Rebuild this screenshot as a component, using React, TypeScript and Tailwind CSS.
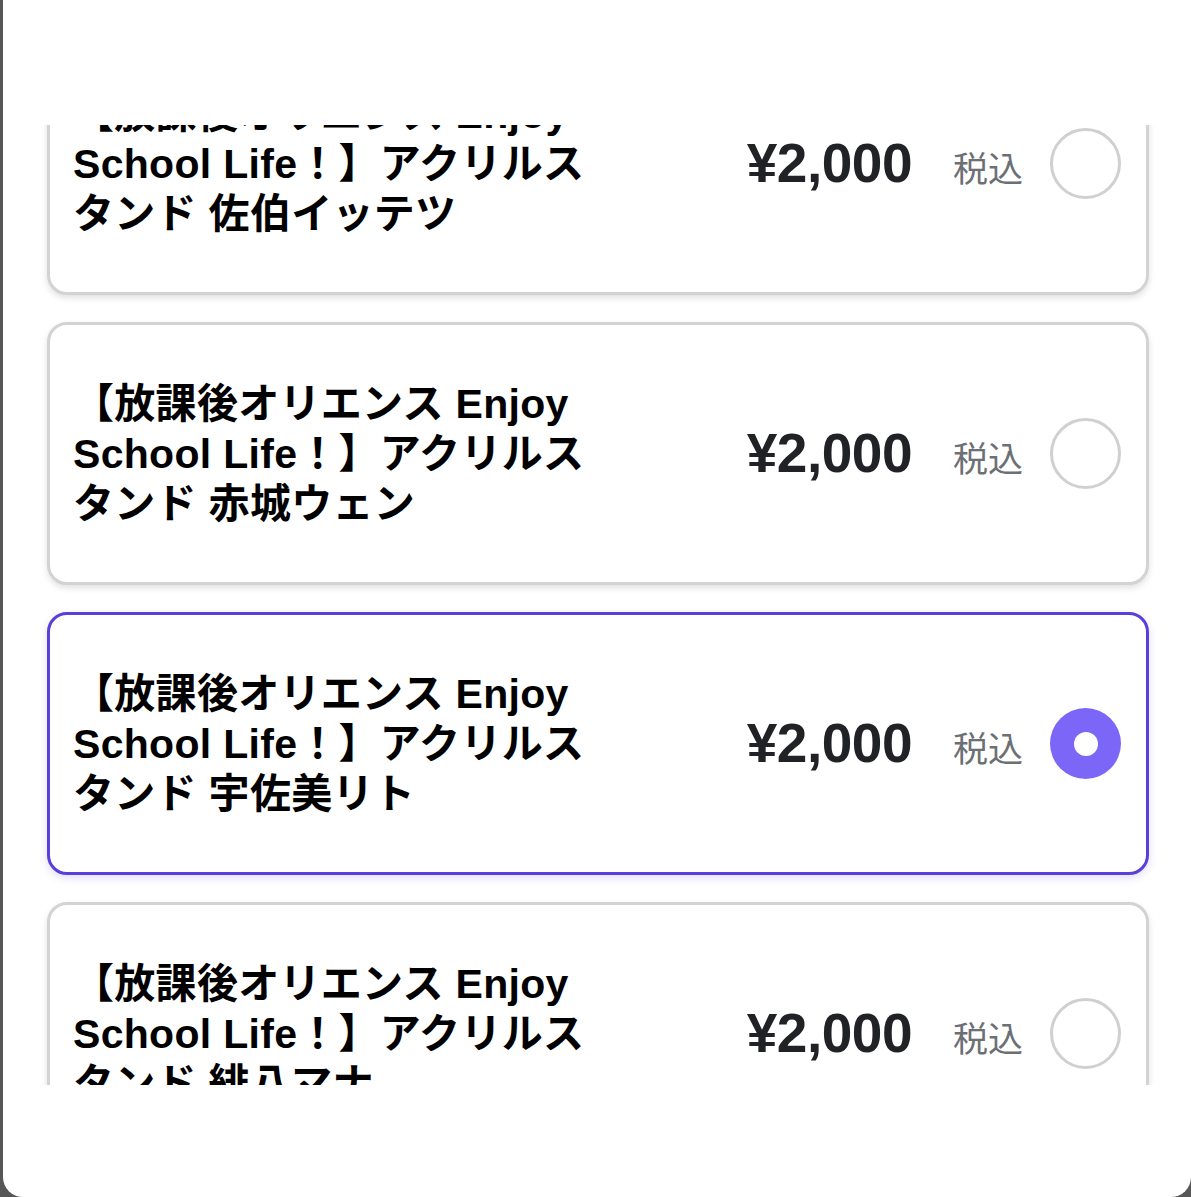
import React, { useLayoutEffect, useRef, useState } from 'react';

interface Item {
  id: number;
  name: string;
  price: number;
}

const items: Item[] = [
  { id: 1, name: '【放課後オリエンス Enjoy School Life！】アクリルスタンド 佐伯イッテツ', price: 2000 },
  { id: 2, name: '【放課後オリエンス Enjoy School Life！】アクリルスタンド 赤城ウェン', price: 2000 },
  { id: 3, name: '【放課後オリエンス Enjoy School Life！】アクリルスタンド 宇佐美リト', price: 2000 },
  { id: 4, name: '【放課後オリエンス Enjoy School Life！】アクリルスタンド 緋八マナ', price: 2000 },
];

const font = { fontFamily: '"Liberation Sans", "Noto Sans CJK JP", sans-serif' };

const formatYen = (n: number) => `¥${n.toLocaleString('en-US')}`;

const App: React.FC = () => {
  const [selected, setSelected] = useState(3);
  const listRef = useRef<HTMLDivElement>(null);

  // list is shown scrolled a little way down
  useLayoutEffect(() => {
    if (listRef.current) listRef.current.scrollTop = 93;
  }, []);

  return (
    <div className="h-[1197px] w-full bg-[#575757] pl-[3px] overflow-hidden" style={font}>
      <div className="h-full bg-white rounded-b-[20px] flex flex-col">
        <div className="h-[125px] shrink-0" />
        <div ref={listRef} className="h-[960px] shrink-0 overflow-hidden">
          <div className="flex flex-col gap-[27px] pl-[44px] pr-[42px] pb-10">
            {items.map((item) => {
              const isSelected = selected === item.id;
              return (
                <button
                  key={item.id}
                  onClick={() => setSelected(item.id)}
                  className={`h-[263px] w-full flex items-center text-left bg-white rounded-[20px] pl-[23px] pr-[25px] ${
                    isSelected
                      ? 'border-[3px] border-[#5a3fda] shadow-[0_3px_8px_rgba(90,63,218,0.18)]'
                      : 'border-[3px] border-[#d3d3d3] shadow-[0_3px_6px_rgba(0,0,0,0.12)]'
                  }`}
                >
                  <div className="w-[532px] text-[41px] leading-[50px] font-bold text-black tracking-[0.3px]">{item.name}</div>
                  <div className="ml-auto flex items-center">
                    <div className="flex items-baseline">
                      <span className="text-[55px] font-bold text-[#202226] tracking-[-0.5px]">{formatYen(item.price)}</span>
                      <span className="ml-[41px] text-[35px] text-[#6c7075]">税込</span>
                    </div>
                    <span
                      className={`ml-[27px] w-[71px] h-[71px] rounded-full flex items-center justify-center ${
                        isSelected ? 'bg-[#7b66f8]' : 'border-[3px] border-[#d0d0d0]'
                      }`}
                    >
                      {isSelected && <span className="w-[24px] h-[24px] rounded-full bg-white" />}
                    </span>
                  </div>
                </button>
              );
            })}
          </div>
        </div>
      </div>
    </div>
  );
};

export default App;
